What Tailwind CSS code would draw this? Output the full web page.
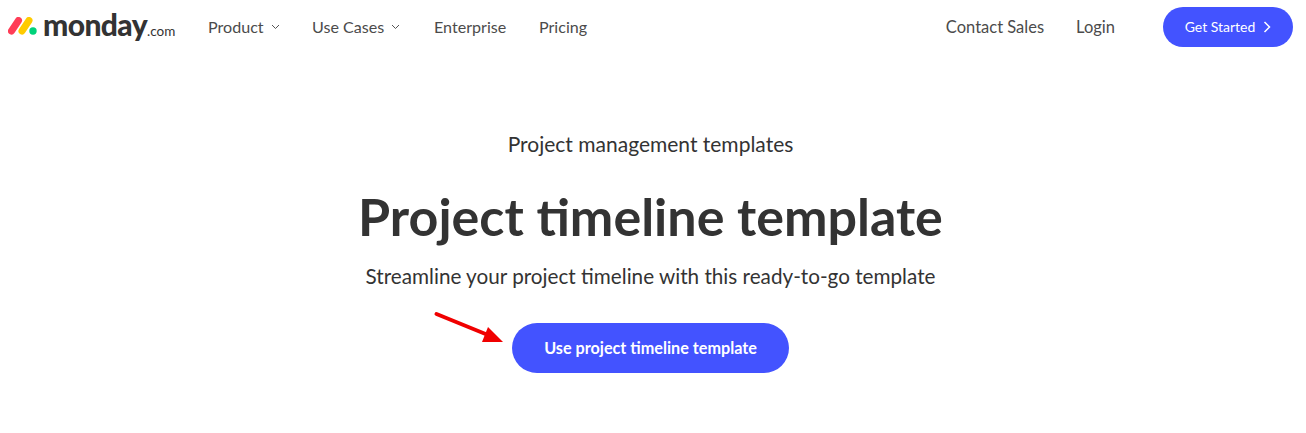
<!DOCTYPE html>
<html lang="en">
  <head>
    <meta charset="UTF-8" />
    <title>Project timeline template</title>
    <script src="https://cdn.jsdelivr.net/npm/@tailwindcss/browser@4"></script>
  </head>
  <body class="bg-white h-[433px] overflow-hidden font-['Lato',sans-serif] text-[#333333]">
    <!-- Nav -->
    <nav class="h-[54px] flex items-center pl-2 pr-[13px]">
      <div class="w-[200px] flex items-center">
        <svg width="30" height="18" viewBox="0 0 30 18" class="shrink-0 mb-[2px]">
          <line x1="3.500" y1="14" x2="10.500" y2="3.500" stroke="#ff3d57" stroke-width="7" stroke-linecap="round" />
          <line x1="14" y1="14" x2="21" y2="3.500" stroke="#ffcb00" stroke-width="7" stroke-linecap="round" />
          <circle cx="25" cy="14" r="3.700" fill="#00d27a" />
        </svg>
        <div class="ml-[5px] flex items-baseline mb-[6px]">
          <span class="text-[30px] font-black tracking-[-0.6px] leading-none text-[#333333]">monday</span>
          <span class="text-[13.500px] leading-none text-[#333333]">.com</span>
        </div>
      </div>
      <div class="flex items-center text-[16.100px] text-[#4b4b4b]">
        <a class="w-[104px] flex items-center gap-[7px]">Product
          <svg width="9" height="6" viewBox="0 0 9 6" fill="none" stroke="#555" stroke-width="1"><path d="M1 1l3.500 3.500L8 1" /></svg>
        </a>
        <a class="w-[122px] flex items-center gap-[7px]">Use Cases
          <svg width="9" height="6" viewBox="0 0 9 6" fill="none" stroke="#555" stroke-width="1"><path d="M1 1l3.500 3.500L8 1" /></svg>
        </a>
        <a class="w-[105px]">Enterprise</a>
        <a>Pricing</a>
      </div>
      <div class="ml-auto flex items-center text-[16.500px] text-[#4b4b4b]">
        <a class="mr-8">Contact Sales</a>
        <a class="mr-12">Login</a>
        <a class="w-[130px] h-10 rounded-[20px] bg-[#4353ff] text-white text-sm flex items-center justify-center gap-2">Get Started
          <svg width="8" height="12" viewBox="0 0 8 12" fill="none" stroke="#fff" stroke-width="1.500"><path d="M1.500 1l5 5-5 5" /></svg>
        </a>
      </div>
    </nav>

    <!-- Hero -->
    <main class="w-[1301px] flex flex-col items-center">
      <p class="mt-[76px] text-[21px] leading-7">Project management templates</p>
      <h1 class="mt-[28px] text-[52px] leading-[60px] font-bold">Project timeline template</h1>
      <p class="mt-[16px] text-[20.700px] leading-7">Streamline your project timeline with this ready-to-go template</p>
      <div class="relative mt-[33px]">
        <svg width="80" height="34" viewBox="0 0 80 34" class="absolute left-[-80px] top-[-12px]">
          <line x1="4.500" y1="3" x2="56" y2="24" stroke="#f00000" stroke-width="4" stroke-linecap="round" />
          <polygon points="71,31 50,31 56,16" fill="#f00000" />
        </svg>
        <a class="w-[277px] h-[50px] pt-px rounded-[25px] bg-[#4353ff] text-white text-[16.200px] font-bold flex items-center justify-center">Use project timeline template</a>
      </div>
    </main>
  </body>
</html>
